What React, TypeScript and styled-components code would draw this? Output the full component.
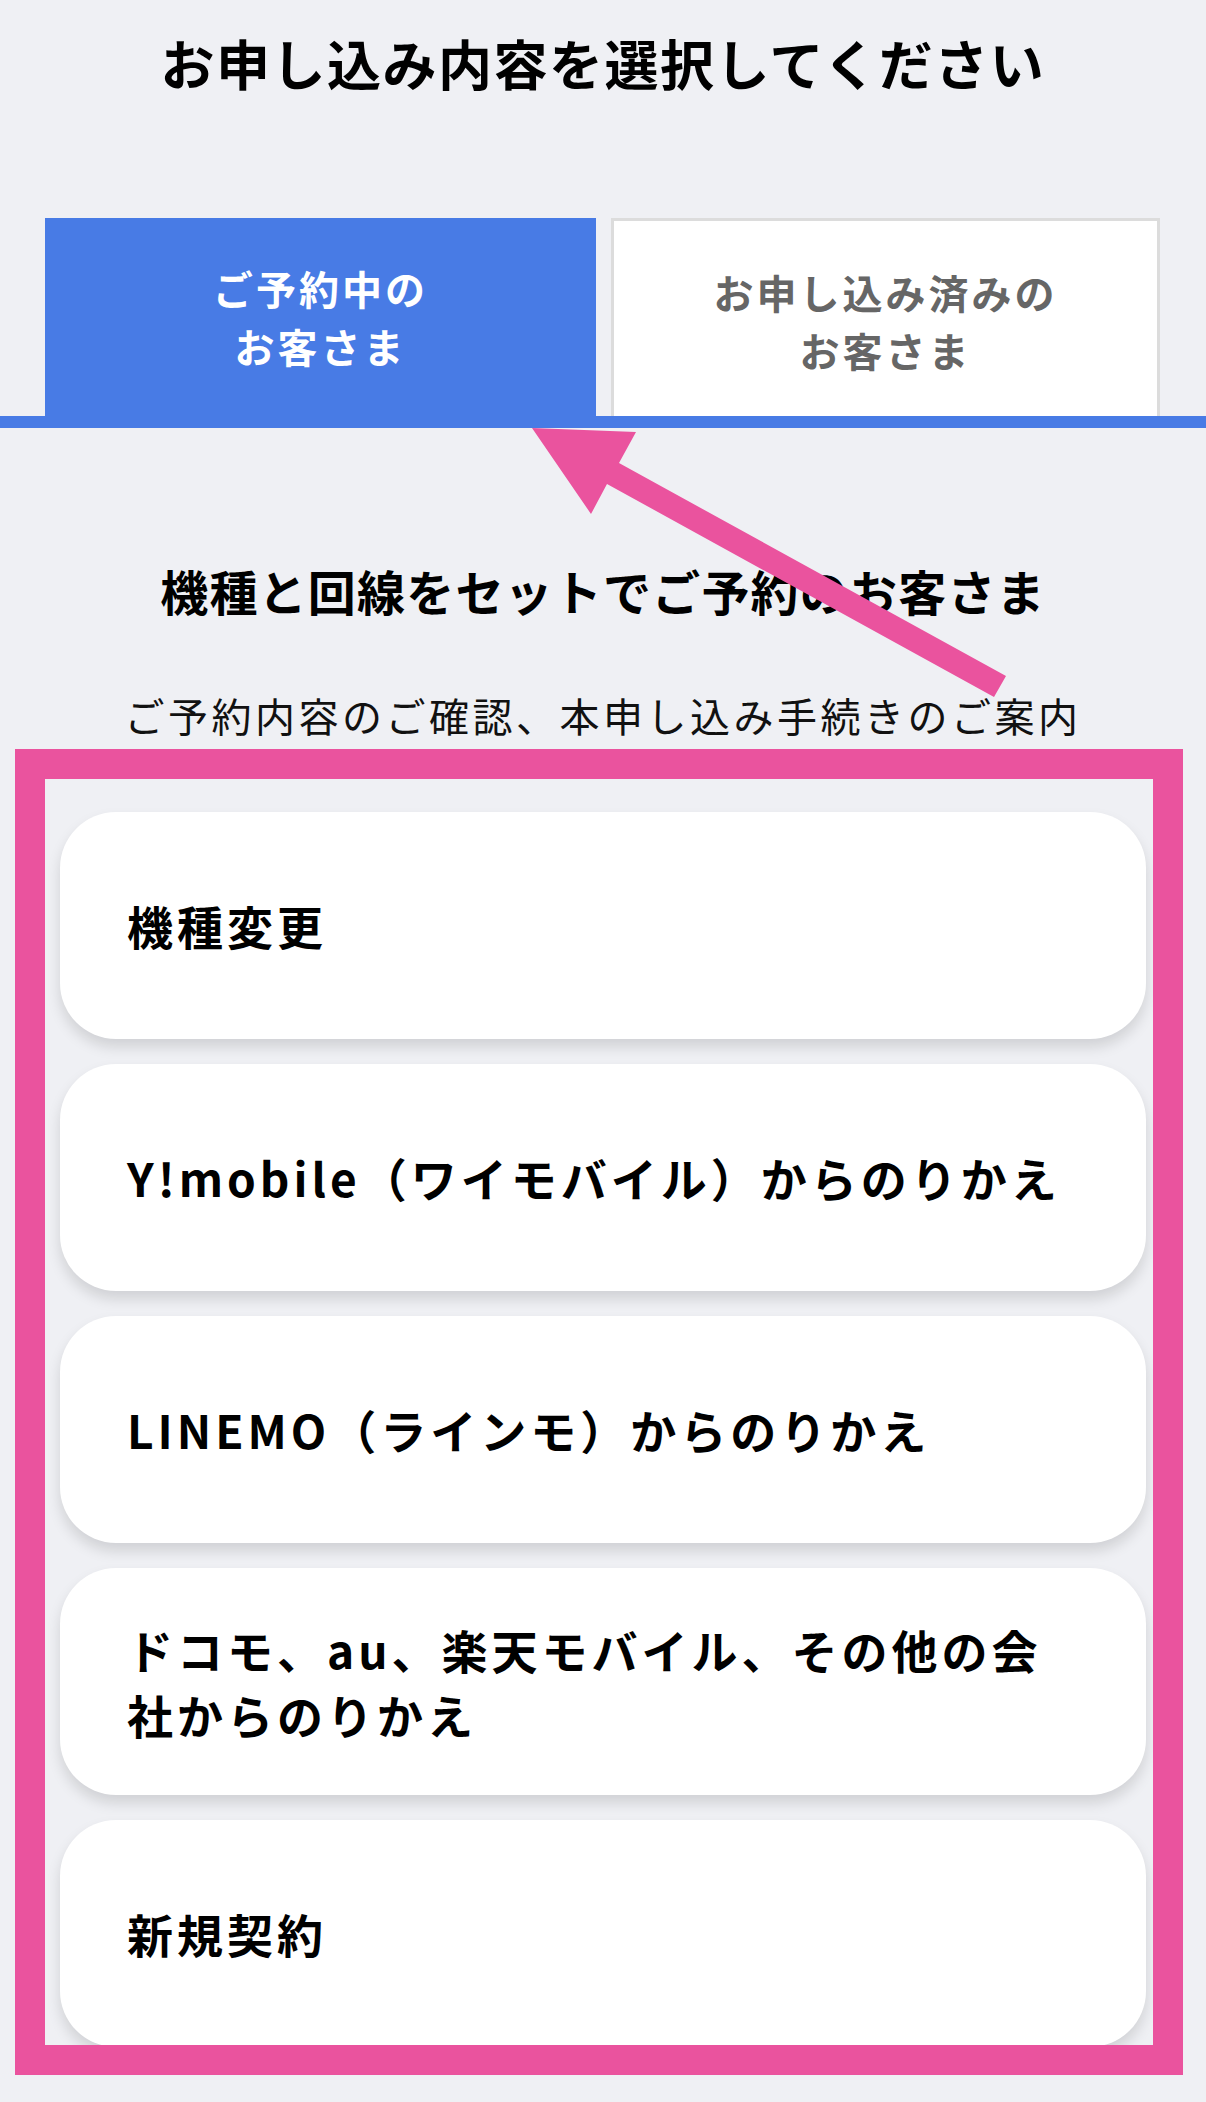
import React from 'react';
import styled, { createGlobalStyle } from 'styled-components';

const GlobalStyle = createGlobalStyle`
  html, body {
    margin: 0;
    padding: 0;
    background: #eff0f4;
  }
  body {
    font-family: "Noto Sans CJK JP", "Noto Sans", sans-serif;
    color: #000;
  }
`;

const Page = styled.div`
  position: relative;
  width: 1206px;
  min-height: 2102px;
  padding-bottom: 55px;
  box-sizing: border-box;
`;

const Title = styled.h1`
  margin: 0;
  padding-top: 25px;
  font-size: 54px;
  line-height: 76px;
  letter-spacing: 1.5px;
  font-weight: 700;
  text-align: center;
`;

const TabRow = styled.div`
  display: grid;
  grid-template-columns: 551px 549px;
  column-gap: 15px;
  margin-top: 117px;
  padding: 0 45px;
  border-bottom: 12px solid #487be5;
`;

const Tab = styled.div<{ $active?: boolean }>`
  height: 198px;
  box-sizing: border-box;
  display: flex;
  align-items: center;
  justify-content: center;
  text-align: center;
  font-size: 40px;
  line-height: 58px;
  letter-spacing: 3px;
  font-weight: 700;
  background: ${({ $active }) => ($active ? '#487be5' : '#fff')};
  color: ${({ $active }) => ($active ? '#fff' : '#666')};
  border: ${({ $active }) => ($active ? 'none' : '3px solid #dcdcdc')};
  border-bottom: none;
  padding-top: ${({ $active }) => ($active ? '0' : '4px')};
`;

const SectionTitle = styled.h2`
  margin: 128px 0 0;
  font-size: 48px;
  line-height: 68px;
  letter-spacing: 1.2px;
  font-weight: 700;
  text-align: center;
`;

const Lead = styled.p`
  margin: 63px 0 0;
  font-size: 40px;
  line-height: 56px;
  letter-spacing: 3.5px;
  font-weight: 400;
  text-align: center;
  color: #111;
`;

const ListWrap = styled.div`
  position: relative;
  margin: 69px 60px 0;
`;

const List = styled.div`
  display: flex;
  flex-direction: column;
  gap: 25px;
`;

const Card = styled.div`
  height: 227px;
  box-sizing: border-box;
  display: flex;
  align-items: center;
  padding: 0 60px 0 67px;
  background: #fff;
  border-radius: 56px;
  box-shadow: 0 8px 14px rgba(0, 0, 0, 0.13);
  font-size: 46px;
  line-height: 65px;
  letter-spacing: 4px;
  font-weight: 700;
  white-space: nowrap;
`;

const Highlight = styled.div`
  position: absolute;
  top: -63px;
  left: -45px;
  right: -37px;
  bottom: -28px;
  border: 30px solid #ea539e;
  pointer-events: none;
`;

const ArrowSvg = styled.svg`
  position: absolute;
  left: 520px;
  top: 420px;
  width: 500px;
  height: 300px;
  pointer-events: none;
`;

const items = [
  '機種変更',
  'Y!mobile（ワイモバイル）からのりかえ',
  'LINEMO（ラインモ）からのりかえ',
  'ドコモ、au、楽天モバイル、その他の会\n社からのりかえ',
  '新規契約',
];

const App = () => {
  return (
    <>
      <GlobalStyle />
      <Page>
        <Title>お申し込み内容を選択してください</Title>
        <TabRow>
          <Tab $active>
            ご予約中の
            <br />
            お客さま
          </Tab>
          <Tab>
            お申し込み済みの
            <br />
            お客さま
          </Tab>
        </TabRow>
        <SectionTitle>機種と回線をセットでご予約のお客さま</SectionTitle>
        <Lead>ご予約内容のご確認、本申し込み手続きのご案内</Lead>
        <ListWrap>
          <List>
            {items.map((label) => (
              <Card key={label}>
                <span>
                  {label.split('\n').map((line, i) => (
                    <React.Fragment key={line}>
                      {i > 0 && <br />}
                      {line}
                    </React.Fragment>
                  ))}
                </span>
              </Card>
            ))}
          </List>
          <Highlight />
        </ListWrap>
        <ArrowSvg viewBox="520 420 500 300">
          <polygon
            points="532,428 636,432 619,463 1006,676 994,697 607,484 591,514"
            fill="#ea539e"
          />
        </ArrowSvg>
      </Page>
    </>
  );
};

export default App;
